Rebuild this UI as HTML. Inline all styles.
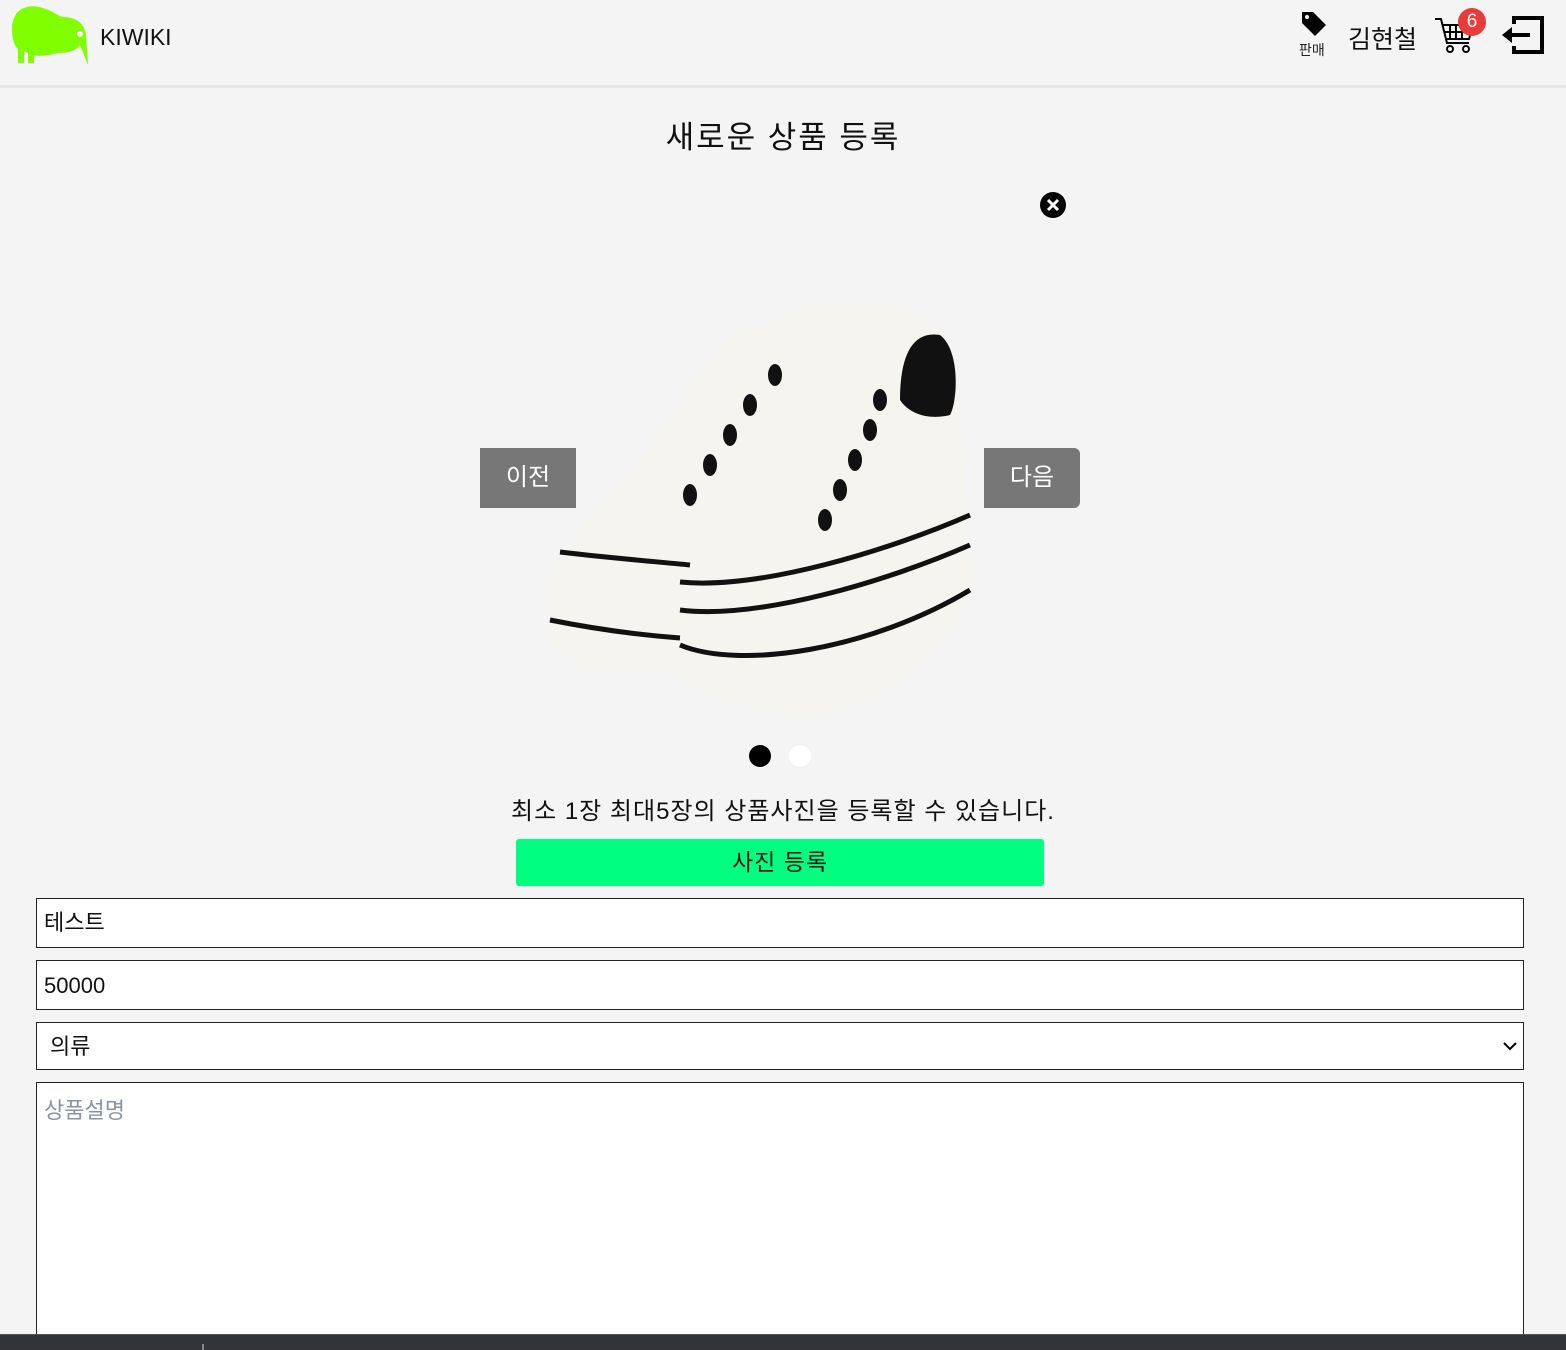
<!DOCTYPE html>
<html><head><meta charset="utf-8"><style>
*{box-sizing:border-box;margin:0;padding:0}
body{width:1566px;height:1350px;overflow:hidden;background:#f4f4f4;font-family:"Liberation Sans","Noto Sans CJK KR",sans-serif;position:relative;color:#111}
.hdr{position:absolute;left:0;top:0;width:1566px;height:88px;border-bottom:3px solid #e6e6e8}
.abs{position:absolute}
.inp{position:absolute;left:36px;width:1488px;border:1px solid #222;background:#fff;font-size:22px;padding-left:7px}
</style></head><body>
<div class="hdr">
<svg class="abs" style="left:10px;top:5px" width="80" height="62" viewBox="0 0 80 62"><path d="M14 3C28-3 44 8 52 12C64 12 74 16 76 30L78 60 70 40C66 46 58 48 48 48C40 50 30 52 24 50L24 58 18 58 18 48 14 46 14 58 8 58 8 44C2 38 2 28 2 20 4 10 8 5 14 3Z" fill="#80ff00"/><circle cx="70" cy="29" r="3" fill="#fff"/></svg>
<div class="abs" style="left:100px;top:24px;font-size:23px">KIWIKI</div>
<svg class="abs" style="left:1300px;top:10px" width="28" height="28" viewBox="0 0 28 28"><path d="M2 2h11l13 13-11 11L2 13z" fill="#000"/><circle cx="7" cy="7" r="2" fill="#f4f4f4"/></svg>
<div class="abs" style="left:1299px;top:40px;font-size:14px;color:#222">판매</div>
<div class="abs" style="left:1348px;top:20px;font-size:25px">김현철</div>
<svg class="abs" style="left:1434px;top:16px" width="42" height="38" viewBox="0 0 42 38" fill="none" stroke="#000" stroke-width="2"><path d="M1 3h6l6 24h22M9 9h30l-4 14H13M16 9v14M22 9v14M28 9v14M11 16h26"/><circle cx="16" cy="33" r="3"/><circle cx="32" cy="33" r="3"/></svg>
<div class="abs" style="left:1458px;top:8px;width:28px;height:28px;border-radius:50%;background:#ea3b3b;color:#fff;font-size:19px;text-align:center;line-height:28px">6</div>
<svg class="abs" style="left:1500px;top:14px" width="46" height="42" viewBox="0 0 46 42" fill="none" stroke="#000" stroke-width="4"><path d="M14 10V4h28v34H14v-6"/><path d="M8 21h22"/><path d="M2 21l10-8v16z" fill="#000" stroke="none"/></svg>
</div>
<div class="abs" style="left:0;width:1566px;top:112px;text-align:center;font-size:31px;letter-spacing:2px">새로운 상품 등록</div>
<svg class="abs" style="left:1040px;top:192px" width="26" height="26" viewBox="0 0 26 26"><circle cx="13" cy="13" r="13" fill="#000"/><path d="M8 8l10 10M18 8L8 18" stroke="#fff" stroke-width="3"/></svg>
<svg class="abs" style="left:540px;top:290px" width="440" height="430" viewBox="0 0 440 430">
<path d="M10 300C20 250 80 200 130 130 170 60 200 30 220 40 250 20 300 10 320 20 340 10 370 20 400 40 430 100 420 200 430 300 410 350 380 390 300 420 230 430 150 400 130 380 100 390 30 380 10 350Z" fill="#f6f4ee"/>
<path d="M360 110C360 70 370 40 400 45 420 60 418 110 410 125 390 130 370 125 360 110Z" fill="#111"/>
<path d="M20 262C70 268 120 272 150 275M140 292C220 300 350 260 430 225M140 320C220 330 350 290 430 255M140 355C200 380 330 360 430 300M10 330C60 340 100 345 140 348" stroke="#111" stroke-width="5" fill="none"/>
<g fill="#111"><ellipse cx="150" cy="205" rx="7" ry="11"/><ellipse cx="170" cy="175" rx="7" ry="11"/><ellipse cx="190" cy="145" rx="7" ry="11"/><ellipse cx="210" cy="115" rx="7" ry="11"/><ellipse cx="235" cy="85" rx="7" ry="11"/><ellipse cx="285" cy="230" rx="7" ry="11"/><ellipse cx="300" cy="200" rx="7" ry="11"/><ellipse cx="315" cy="170" rx="7" ry="11"/><ellipse cx="330" cy="140" rx="7" ry="11"/><ellipse cx="340" cy="110" rx="7" ry="11"/></g>
</svg>
<div class="abs" style="left:480px;top:448px;width:96px;height:60px;background:#777;color:#fff;font-size:24px;text-align:center;line-height:60px">이전</div>
<div class="abs" style="left:984px;top:448px;width:96px;height:60px;background:#777;color:#fff;font-size:24px;text-align:center;line-height:60px;border-radius:0 6px 6px 0">다음</div>
<div class="abs" style="left:749px;top:745px;width:22px;height:22px;border-radius:50%;background:#000"></div>
<div class="abs" style="left:789px;top:745px;width:22px;height:22px;border-radius:50%;background:#fff"></div>
<div class="abs" style="left:0;width:1566px;top:791px;text-align:center;font-size:24px;letter-spacing:1px">최소 1장 최대5장의 상품사진을 등록할 수 있습니다.</div>
<div class="abs" style="left:516px;top:839px;width:528px;height:47px;background:#00ff80;border-radius:3px;text-align:center;line-height:47px;font-size:23px;letter-spacing:1px">사진 등록</div>
<div class="inp" style="top:898px;height:50px;line-height:48px">테스트</div>
<div class="inp" style="top:960px;height:50px;line-height:50px">50000</div>
<div class="inp" style="top:1022px;height:48px;line-height:48px;padding-left:13px">의류<svg style="position:absolute;right:6px;top:18px" width="14" height="10" viewBox="0 0 14 10"><path d="M1 2l6 6 6-6" stroke="#000" stroke-width="2" fill="none"/></svg></div>
<div class="inp" style="top:1082px;height:260px;padding-top:10px;color:#8a93a6">상품설명</div>
<div class="abs" style="left:0;top:1334px;width:1566px;height:16px;background:#333438;border-top:1px solid #555"></div>
<div class="abs" style="left:202px;top:1344px;width:2px;height:6px;background:#888"></div>
</body></html>
